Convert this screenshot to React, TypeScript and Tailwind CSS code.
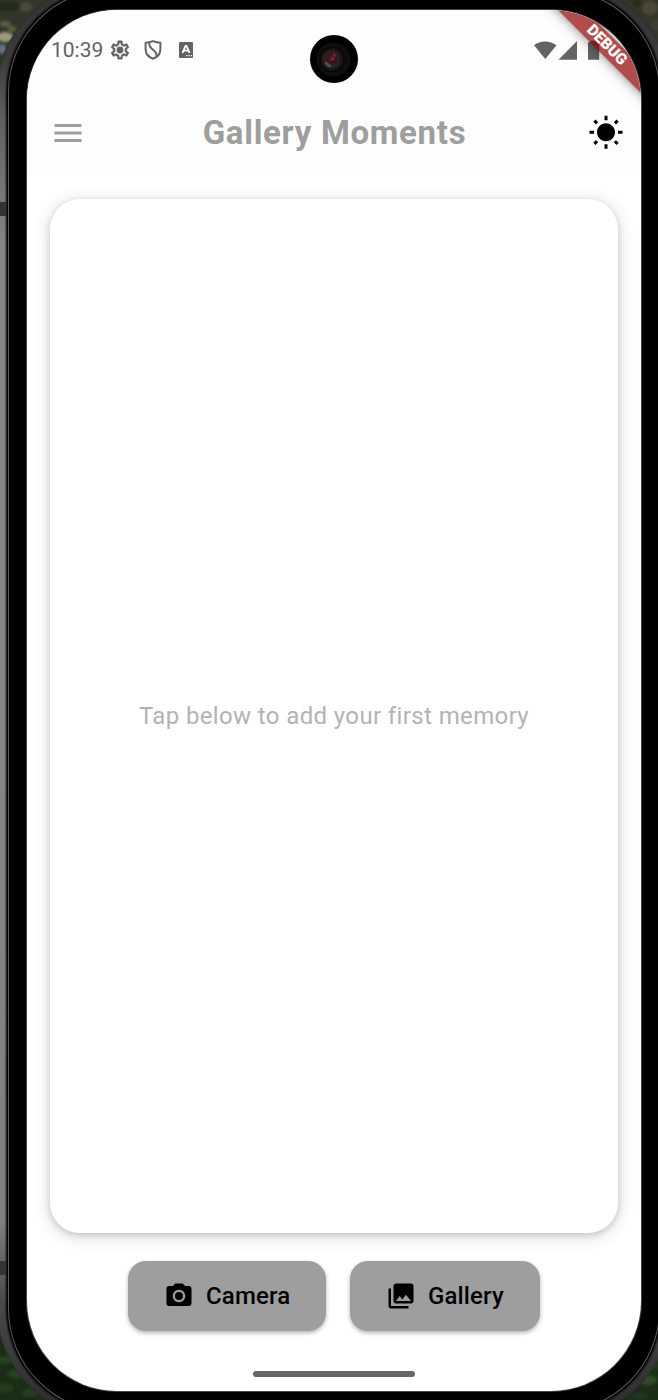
import { MdMenu, MdWbSunny, MdPhotoCamera, MdPhotoLibrary } from "react-icons/md";

function Backdrop() {
  return (
    <svg className="absolute inset-0 h-[1400px] w-[658px]" viewBox="0 0 658 1400">
      <defs>
        <filter id="soft" x="-50%" y="-50%" width="200%" height="200%">
          <feGaussianBlur stdDeviation="1.5" />
        </filter>
      </defs>
      <rect width="658" height="700" fill="#33352a" />
      <rect y="700" width="658" height="700" fill="#1a2d16" />
      <g filter="url(#soft)">
        <ellipse cx="8" cy="6" rx="12" ry="5" fill="#23291b" />
        <ellipse cx="26" cy="7" rx="6" ry="5" fill="#4b4c38" />
        <ellipse cx="5" cy="24" rx="6" ry="3" fill="#5c6044" />
        <ellipse cx="5" cy="37" rx="8" ry="5" fill="#9a9c80" />
        <ellipse cx="12" cy="29" rx="4" ry="3" fill="#55683d" />
        <ellipse cx="2" cy="49" rx="4" ry="5" fill="#637488" />
        <ellipse cx="650" cy="8" rx="8" ry="7" fill="#4c4838" />
        <ellipse cx="637" cy="3" rx="5" ry="4" fill="#25291f" />
        <ellipse cx="656" cy="25" rx="5" ry="7" fill="#3b3d30" />
        <ellipse cx="5" cy="1360" rx="8" ry="4" fill="#27421f" />
        <ellipse cx="16" cy="1374" rx="9" ry="4" fill="#28441e" />
        <ellipse cx="5" cy="1388" rx="9" ry="5" fill="#203b1c" />
        <ellipse cx="30" cy="1393" rx="8" ry="4" fill="#263e20" />
        <ellipse cx="648" cy="1380" rx="9" ry="5" fill="#304a28" />
        <ellipse cx="655" cy="1366" rx="5" ry="4" fill="#26351f" />
        <ellipse cx="640" cy="1396" rx="9" ry="4" fill="#1f351a" />
      </g>
    </svg>
  );
}

function StatusBar() {
  return (
    <div className="flex h-[80px] items-center justify-between pl-[24px] pr-[40px] text-[#636363]">
      <div className="flex items-center">
        <span className="w-[53px] text-[21px] leading-6">10:39</span>
        <svg className="ml-[5px] h-[22px] w-[22px]" viewBox="0 0 24 24" fill="currentColor">
          <path d="M19.43 12.98c.04-.32.07-.64.07-.98s-.03-.66-.07-.98l2.11-1.65c.19-.15.24-.42.12-.64l-2-3.46c-.09-.16-.26-.25-.44-.25-.06 0-.12.01-.17.03l-2.49 1c-.52-.4-1.08-.73-1.69-.98l-.38-2.65A.488.488 0 0 0 14 2h-4c-.25 0-.46.18-.49.42l-.38 2.65c-.61.25-1.17.59-1.69.98l-2.49-1c-.06-.02-.12-.03-.18-.03-.17 0-.34.09-.43.25l-2 3.46c-.13.22-.07.49.12.64l2.11 1.65c-.04.32-.07.65-.07.98s.03.66.07.98l-2.11 1.65c-.19.15-.24.42-.12.64l2 3.46c.09.16.26.25.44.25.06 0 .12-.01.17-.03l2.49-1c.52.4 1.08.73 1.69.98l.38 2.65c.03.24.24.42.49.42h4c.25 0 .46-.18.49-.42l.38-2.65c.61-.25 1.17-.59 1.69-.98l2.49 1c.06.02.12.03.18.03.17 0 .34-.09.43-.25l2-3.46c.12-.22.07-.49-.12-.64zM17.4 12.1l-.1 1.6 1.9 1.5-.8 1.4-2.3-.9-1.7 1.2-1 .5-.3 2.4h-1.9l-.4-2.4-1.9-.8-1-.8-2.2.9-.9-1.5 1.9-1.4-.1-1.7.1-1.7-1.9-1.5.9-1.5 2.3.9 1.7-1.2 1-.4.4-2.4h1.8l.4 2.4 1.9.8 1 .8 2.3-.9.9 1.5-2 1.4z" fillRule="evenodd" stroke="currentColor" strokeWidth=".5" />
          <circle cx="12" cy="12" r="3.7" />
        </svg>
        <svg className="ml-[11px] h-[22px] w-[22px]" viewBox="0 0 22 22" fill="none" stroke="currentColor" strokeWidth="2">
          <path d="M11 2.200C8.600 3.200 6.200 3.700 3.600 3.700V10c0 4.600 3 8.200 7.400 9.700 4.400-1.500 7.400-5.100 7.400-9.700V3.700c-2.600 0-5-.5-7.400-1.500Z" strokeLinejoin="round" />
          <path d="M7.300 3.700C7 7 8.200 8.800 11 10.800c2.700 2 3.800 3.700 3.500 7" />
        </svg>
        <svg className="ml-[15px] h-[16px] w-[14px]" viewBox="0 0 14 16">
          <rect width="14" height="16" rx="1" fill="currentColor" />
          <path d="M3.500 10.800 6.500 4h1l3 6.800M4.700 8.600h4.600" fill="none" stroke="white" strokeWidth="1.800" />
          <path d="M7 13h1.300v1.300H7zM9.300 13h1.300v1.300H9.300zM11.600 13h1.300v1.300h-1.300z" fill="white" />
        </svg>
      </div>
      <svg className="h-[20px] w-[67px]" viewBox="0 0 67 20" fill="currentColor">
        <path d="M0 5.200C6 .1 16 .1 22.500 5.200L11.300 19Z" />
        <path d="M24.500 19.700 43 1v18.700Z" />
        <path d="M54 3.200q0-1.500 1.500-1.500H57V.8h5v.9h1.700q1.500 0 1.500 1.500v16.500H54Z" />
      </svg>
    </div>
  );
}

function FrontCamera() {
  return (
    <svg className="absolute left-[283px] top-[25px] h-[48px] w-[48px]" viewBox="0 0 48 48">
      <defs>
        <radialGradient id="lens" cx="52%" cy="45%" r="55%">
          <stop offset="0" stopColor="#6d1024" />
          <stop offset=".5" stopColor="#33161c" />
          <stop offset="1" stopColor="#2b2b2b" />
        </radialGradient>
      </defs>
      <circle cx="24" cy="24" r="24" fill="#000" />
      <circle cx="23.500" cy="24.500" r="17" fill="#0e0e0e" />
      <circle cx="22" cy="24.500" r="12" fill="#171717" stroke="#080808" strokeWidth="1.500" />
      <circle cx="21.500" cy="24.500" r="8.500" fill="url(#lens)" />
      <path d="M14.500 27q1.500 5 6.500 5.500l0-2-4-3.500Z" fill="#888" opacity=".45" />
      <path d="m23 17.500 3 3-2 2Z" fill="#a34a87" opacity=".5" />
      <circle cx="22.500" cy="24" r="1.200" fill="#c1233d" />
    </svg>
  );
}

export default function App() {
  return (
    <div className="relative h-[1400px] w-[658px] overflow-hidden bg-[#1a2d16] font-[Roboto,sans-serif]">
      <Backdrop />
      <div className="relative -ml-[4px] -mt-[20px] h-[1441px] w-[676px] rounded-[116px] bg-[linear-gradient(180deg,#303030_0px,#3c3c3c_80px,#606060_140px,#858585_260px,#858585_700px,#808080_1240px,#4a4a4a_1320px,#292929_1441px)] pl-[12px] pr-[12px] pt-[9px] shadow-[inset_0_0_2px_#222]">
        <div className="h-[1423px] rounded-[103px] bg-[#5a5a5a] p-px shadow-[0_0_2px_2px_#000]">
          <div className="h-[1421px] rounded-[102px] bg-black pl-[18px] pt-[20px]">
            <main className="relative flex h-[1381px] w-[614px] flex-col overflow-hidden rounded-[90px] bg-white shadow-[0_0_0_1px_#444]">
              <header className="h-[166px] shrink-0 bg-[#fdfdfd]">
                <StatusBar />
                <div className="flex h-[85px] items-center justify-between pl-[23px] pr-[16.500px]">
                  <MdMenu className="h-[36px] w-[36px] text-[#9e9e9e]" />
                  <h1 className="-ml-[5.500px] whitespace-nowrap text-[33px] font-bold leading-10 tracking-[0.7px] text-[#9e9e9e]">Gallery Moments</h1>
                  <MdWbSunny className="h-[36px] w-[36px] text-black" />
                </div>
              </header>
              <section className="mx-[23px] mt-[23px] flex h-[1034px] shrink-0 items-center justify-center rounded-[30px] bg-white shadow-[0_3px_18px_rgba(0,0,0,0.16),0_2px_6px_rgba(0,0,0,0.14)]">
                <p className="whitespace-nowrap text-[24px] leading-8 tracking-[0.375px] text-[#b3b3b3]">Tap below to add your first memory</p>
              </section>
              <div className="mt-[28px] flex h-[70px] shrink-0 justify-center gap-[24px]">
                <button className="flex w-[198px] items-center rounded-[18px] bg-[#9e9e9e] pl-[36px] text-[24px] font-medium tracking-[0.15px] shadow-[0_2px_4px_rgba(0,0,0,0.3)]"><MdPhotoCamera className="h-[30px] w-[30px]" /><span className="ml-[12px]">Camera</span></button>
                <button className="flex w-[190px] items-center rounded-[18px] bg-[#9e9e9e] pl-[36px] text-[24px] font-medium tracking-[0.15px] shadow-[0_2px_4px_rgba(0,0,0,0.3)]"><MdPhotoLibrary className="h-[30px] w-[30px]" /><span className="ml-[12px]">Gallery</span></button>
              </div>
              <div className="mx-auto mt-[40px] h-[6px] w-[162px] shrink-0 rounded-full bg-[#666]" />
              <FrontCamera />
              <div className="absolute left-[489px] top-[25px] flex h-[19px] w-[180px] rotate-45 items-center justify-center bg-[rgba(143,0,0,0.7)] pl-[2px] text-[15.500px] font-black leading-none text-white shadow-[0_0_12px_rgba(0,0,0,0.5)]">DEBUG</div>
            </main>
          </div>
        </div>
      </div>
      <div className="absolute left-0 top-[202px] h-[14px] w-[6px] bg-[#333]" />
      <div className="absolute left-0 top-[1261px] h-[14px] w-[6px] bg-[#333]" />
    </div>
  );
}
